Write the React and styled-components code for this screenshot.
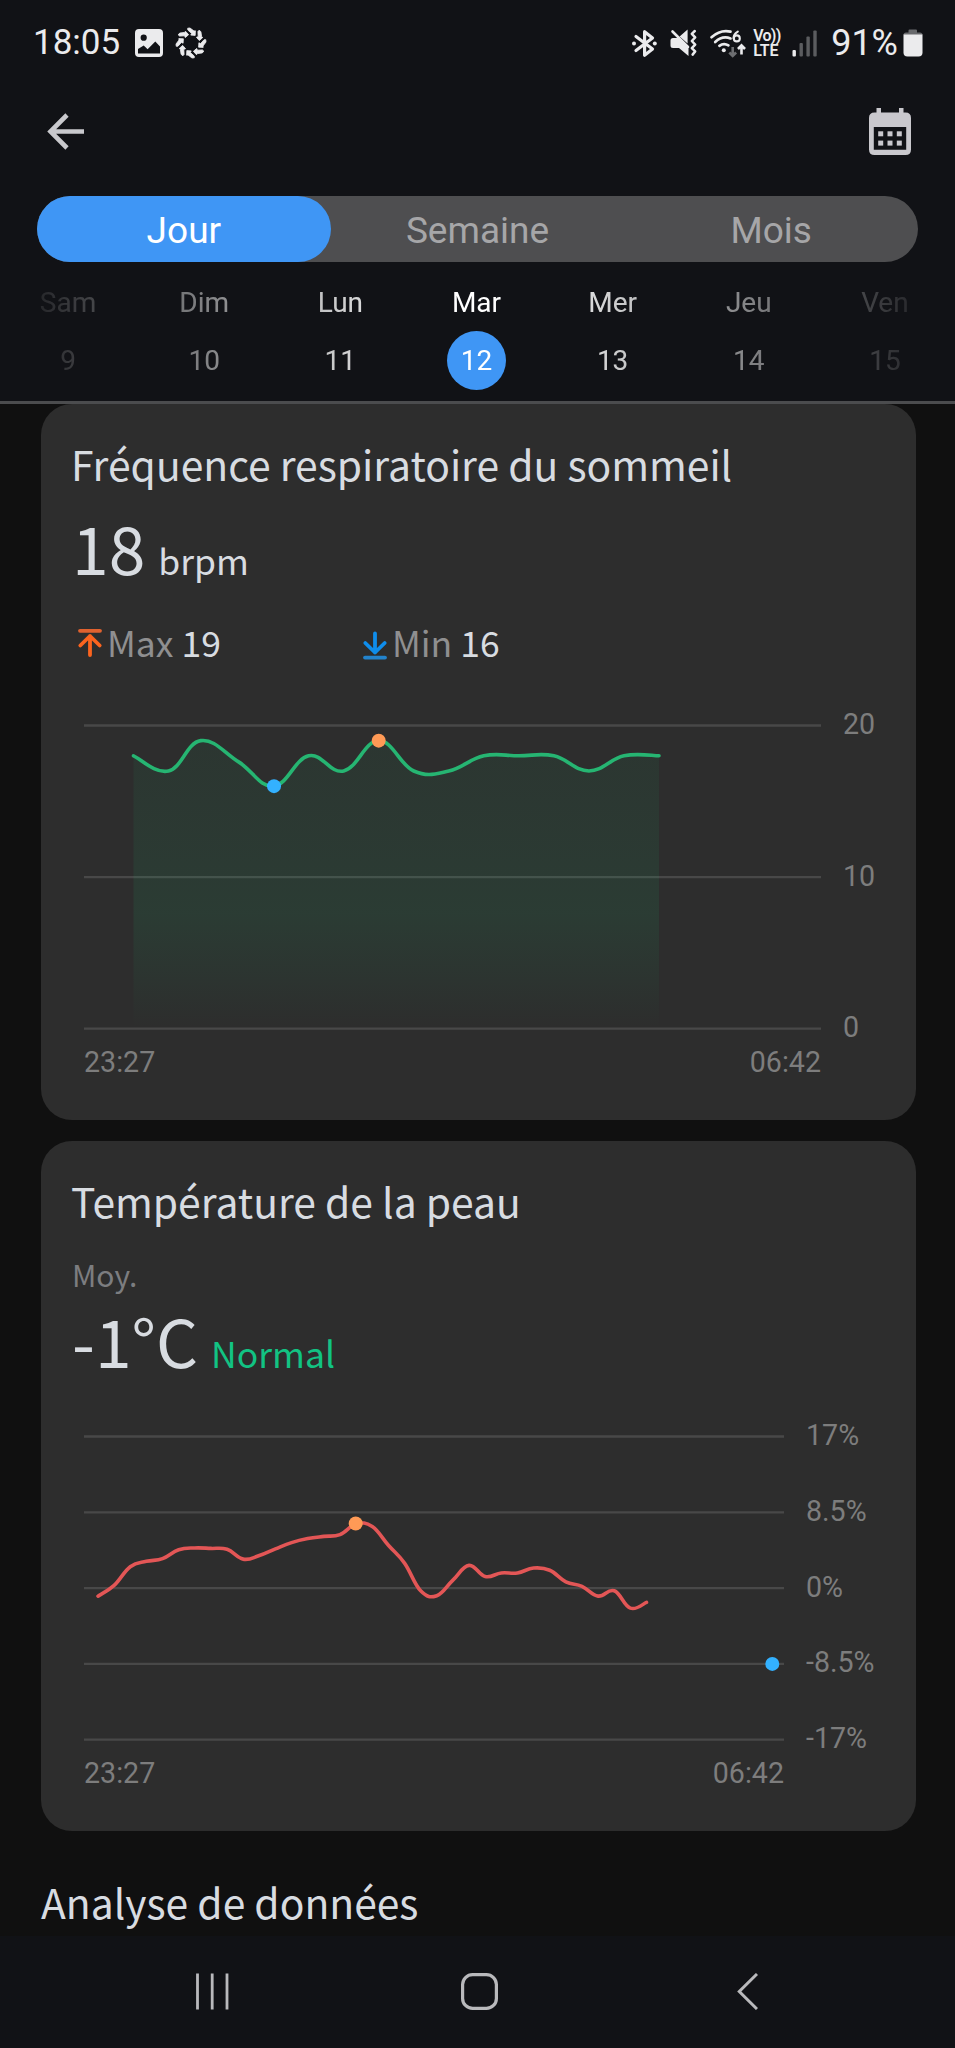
import React, { useState } from 'react';
import styled, { createGlobalStyle } from 'styled-components';

const GlobalStyle = createGlobalStyle`
  * {
    box-sizing: border-box;
  }

  body {
    margin: 0;
    background: #101010;
    font-family: Roboto, sans-serif;
  }

  button {
    border: none;
    background: none;
    padding: 0;
    font-family: inherit;
    cursor: pointer;
  }

  svg {
    display: block;
    flex-shrink: 0;
  }
`;

const Screen = styled.div`
  width: 955px;
  height: 2048px;
  display: flex;
  flex-direction: column;
  overflow: hidden;
  background: #101010;
`;

const Header = styled.header`
  height: 404px;
  flex-shrink: 0;
  background: #111216;
  border-bottom: 3px solid #4b4c4e;
`;

const StatusBar = styled.div`
  height: 86px;
  padding: 0 32px 0 33px;
  display: flex;
  justify-content: space-between;
  align-items: center;
  color: #ebebed;
`;

const StatusGroup = styled.div`
  display: flex;
  align-items: center;
`;

const StatusText = styled.span`
  font-size: ${({ $size }) => $size || 35}px;
  line-height: 40px;
  margin-right: ${({ $gap }) => $gap}px;
`;

const StatusIcon = styled.svg`
  margin-right: ${({ $gap }) => $gap || 0}px;
  overflow: visible;
`;

const VoLte = styled.div`
  width: 29px;
  margin-right: 10px;
  display: flex;
  flex-direction: column;
  font-size: 16px;
  line-height: 15.5px;
  font-weight: 600;
  white-space: nowrap;
`;

const VoLteLine = styled.span`
  letter-spacing: ${({ $tight }) => ($tight ? '-0.7px' : '-0.2px')};
`;

const Toolbar = styled.div`
  height: 91px;
  padding: 0 44px 0 47px;
  display: flex;
  justify-content: space-between;
  align-items: center;
`;

const Tabs = styled.div`
  margin: 19px 37px 0 37px;
  height: 66px;
  display: flex;
  border-radius: 33px;
  background: #4e4e50;
`;

const Tab = styled.button`
  flex: 1;
  padding-top: 3px;
  border-radius: 33px;
  font-size: 37px;
  line-height: 63px;
  color: ${({ $active }) => ($active ? '#fff' : '#a6a6a8')};
  background: ${({ $active }) => ($active ? '#3f96f5' : 'transparent')};
`;

/* The days fade out towards both edges of the strip */
const Week = styled.div`
  display: grid;
  grid-template-columns: repeat(7, 1fr);
  padding: 21px 2px 0 0;
  mask-image: linear-gradient(to right, transparent, #000 430px, #000 525px, transparent);
`;

const Day = styled.button`
  display: flex;
  flex-direction: column;
  align-items: center;
  font-size: 28px;
  color: #fff;
`;

const DayName = styled.span`
  line-height: 40px;
`;

const DayNumber = styled.span`
  width: 59px;
  height: 59px;
  margin-top: 7.5px;
  line-height: 59px;
  border-radius: 50%;
  background: ${({ $active }) => ($active ? '#3f96f5' : 'transparent')};
`;

const Content = styled.main`
  flex: 1;
  min-height: 0;
  padding: 0 39px 0 41px;
  overflow: hidden;
  font-family: 'Noto Sans CJK SC', sans-serif;
  color: #d8dce1;
`;

const Card = styled.section`
  height: ${({ $height }) => $height}px;
  margin-bottom: 21px;
  padding: 30px 30px 0 31px;
  border-radius: 31px;
  background: #2d2d2d;
`;

const Title = styled.h2`
  margin: 0;
  font-size: 40.8px;
  font-weight: 400;
  line-height: 60px;
  white-space: nowrap;
`;

const CardTitle = styled(Title)`
  margin-left: -1px;
`;

const SectionTitle = styled(Title)`
  margin-top: 41px;
`;

const Caption = styled.div`
  margin-top: 23px;
  font-size: 30px;
  line-height: 40px;
  color: #7c7d80;
`;

const Value = styled.div`
  margin-top: ${({ $top }) => $top}px;
  height: 80px;
  display: flex;
  align-items: baseline;
  gap: ${({ $gap }) => $gap}px;
  font-size: 66px;
  line-height: 80px;
`;

const Unit = styled.span`
  font-size: 35.5px;
  line-height: 50px;
  color: ${({ $color }) => $color || 'inherit'};
`;

const Stats = styled.div`
  margin-top: 31px;
  display: flex;
`;

const Stat = styled.div`
  width: 285px;
  display: flex;
  align-items: center;
  font-size: 35.5px;
  line-height: 50px;
  white-space: pre;
`;

const StatLabel = styled.span`
  color: #8f8f90;
`;

const ChartArea = styled.div`
  margin: ${({ $top }) => $top}px 0 0 12px;
  display: flex;
  font-family: Roboto, sans-serif;
  font-size: 28.6px;
  line-height: 30px;
  color: #7d7d7d;
`;

const Plot = styled.div`
  width: ${({ $width }) => $width}px;
`;

const Times = styled.div`
  margin-top: 5px;
  display: flex;
  justify-content: space-between;
`;

const AxisLabels = styled.div`
  height: 333px;
  margin: -1px 0 0 22px;
  display: flex;
  flex-direction: column;
  justify-content: space-between;
`;

const NavBar = styled.nav`
  height: 112px;
  flex-shrink: 0;
  padding: 0 197px 2px 196px;
  display: flex;
  align-items: center;
  background: #111216;
`;

const NavButton = styled.button`
  margin-left: ${({ $left }) => $left || 0}px;
`;

const days = [
  { name: 'Sam', number: 9 },
  { name: 'Dim', number: 10 },
  { name: 'Lun', number: 11 },
  { name: 'Mar', number: 12 },
  { name: 'Mer', number: 13 },
  { name: 'Jeu', number: 14 },
  { name: 'Ven', number: 15 },
];

// [time slot, value]
const breathing = [
  [0, 18], [1, 17], [1.92, 19], [3, 17.6], [4, 16], [5, 18], [6, 17], [7, 19],
  [8, 17], [9, 17], [10, 18], [11, 18], [12, 18], [13, 17], [14, 18], [15, 18],
];

const skin = [
  -0.9, 0.3, 2.4, 3, 3.3, 4.3, 4.5, 4.45, 4.35, 3.25, 3.65, 4.4, 5.1, 5.55, 5.8, 6, 7.2, 6.9,
  4.8, 2.8, -0.3, -0.85, 0.9, 2.55, 1.3, 1.7, 1.7, 2.25, 2, 0.7, 0.2, -0.9, -0.3, -2.25, -1.6,
].map((value, slot) => [slot, value]);

// Cubic curve through all points, tangents taken from the neighbours
const curve = (points) => {
  const k = 0.2;
  const at = (i) => points[Math.max(0, Math.min(points.length - 1, i))];
  let d = `M${at(0).x} ${at(0).y}`;
  for (let i = 1; i < points.length; i++) {
    const prev = at(i - 1);
    const cur = at(i);
    const c1x = prev.x + (cur.x - at(i - 2).x) * k;
    const c1y = prev.y + (cur.y - at(i - 2).y) * k;
    const c2x = cur.x - (at(i + 1).x - prev.x) * k;
    const c2y = cur.y - (at(i + 1).y - prev.y) * k;
    d += ` C${c1x} ${c1y} ${c2x} ${c2y} ${cur.x} ${cur.y}`;
  }
  return d;
};

const LineChart = ({ top, width, min, max, ticks, values, from, to, color, fill, dots }) => {
  const y0 = 15.5;
  const y1 = 318.7;
  const toY = (v) => y1 - ((v - min) / (max - min)) * (y1 - y0);
  const step = (to - from) / (values.length - 1);
  const points = values.map(([slot, v]) => ({ x: from + slot * step, y: toY(v) }));
  const line = curve(points);

  return (
    <ChartArea $top={top}>
      <Plot $width={width}>
        <svg width={width} height="332">
          <defs>
            <linearGradient id="area" gradientUnits="userSpaceOnUse" x1="0" y1="30" x2="0" y2={y1}>
              <stop offset="0" stopColor="#18c070" stopOpacity="0.06" />
              <stop offset="0.6" stopColor="#18c070" stopOpacity="0.1" />
              <stop offset="0.82" stopColor="#18c070" stopOpacity="0.05" />
              <stop offset="1" stopColor="#18c070" stopOpacity="0" />
            </linearGradient>
          </defs>
          {ticks.map((tick, i) => {
            const y = y0 + ((y1 - y0) / (ticks.length - 1)) * i;
            return <line key={tick} x1="0" x2={width} y1={y} y2={y} stroke="#484848" strokeWidth="2.3" />;
          })}
          {fill && <path d={`${line} V${y1} H${from} Z`} fill="url(#area)" />}
          <path d={line} fill="none" stroke={color} strokeWidth="3.6" strokeLinecap="round" />
          {dots.map((dot) => (
            <circle key={dot.color} cx={dot.x} cy={toY(dot.value)} r="7" fill={dot.color} />
          ))}
        </svg>
        <Times>
          <span>23:27</span>
          <span>06:42</span>
        </Times>
      </Plot>
      <AxisLabels>
        {ticks.map((tick) => (
          <span key={tick}>{tick}</span>
        ))}
      </AxisLabels>
    </ChartArea>
  );
};

const GalleryIcon = () => (
  <StatusIcon width="28" height="28" viewBox="0 0 28 28" $gap={12}>
    <path
      fillRule="evenodd"
      fill="currentColor"
      d="M4 0H24A4 4 0 0 1 28 4V24A4 4 0 0 1 24 28H4A4 4 0 0 1 0 24V4A4 4 0 0 1 4 0ZM8.7 5.6A3.1 3.1 0 1 0 8.7 11.8A3.1 3.1 0 1 0 8.7 5.6ZM3 20V24.6H25V17.5L20.3 12.6L12.6 20.3L8.7 16.4Z"
    />
  </StatusIcon>
);

const SwirlIcon = () => (
  <StatusIcon width="32" height="32" viewBox="-16 -16 32 32">
    {[0, 45, 90, 135, 180, 225, 270, 315].map((angle) => (
      <path
        key={angle}
        transform={`rotate(${angle})`}
        fill="currentColor"
        stroke="currentColor"
        strokeWidth="0.8"
        strokeLinejoin="round"
        d="M-3.3 -14.8L-1 -15L3 -12L4.4 -12.2L4.2 -7.6L-0.2 -7.9L0.6 -9.6L-3.2 -13Z"
      />
    ))}
  </StatusIcon>
);

const BluetoothIcon = () => (
  <StatusIcon width="25" height="29" viewBox="0 0 25 29" $gap={13}>
    <path
      d="M4 7.5L20.5 20L12.6 26.3V2.7L20.5 9L4 21.5"
      fill="none"
      stroke="currentColor"
      strokeWidth="3.2"
      strokeLinejoin="round"
      strokeLinecap="round"
    />
    <circle cx="2" cy="14.5" r="2" fill="currentColor" />
    <circle cx="22.8" cy="14.5" r="2" fill="currentColor" />
  </StatusIcon>
);

const MuteIcon = () => (
  <StatusIcon width="27" height="28" viewBox="0 0 27 28" $gap={13}>
    <path d="M9.6 7.5L17.6 0.5V14.5ZM0.5 11.5Q0.5 9 3 9H8L18.5 19.5V27L9 19H3Q0.5 19 0.5 16.5Z" fill="currentColor" />
    <path d="M2.5 2.5L18 18" stroke="currentColor" strokeWidth="2.6" strokeLinecap="round" />
    <path
      d="M24.8 2L21.8 4.8L25.2 8.4L21.8 12L25.2 15.6L21.8 19.2L25.2 22.4L22.6 25.6"
      fill="none"
      stroke="currentColor"
      strokeWidth="2.5"
      strokeLinejoin="round"
      strokeLinecap="round"
    />
  </StatusIcon>
);

const WifiIcon = () => (
  <StatusIcon width="36" height="28" viewBox="0 0 36 28" $gap={7}>
    <g fill="none" stroke="currentColor" strokeWidth="2.7" strokeLinecap="round">
      <path d="M1.5 8.2Q10.5 0.2 20.5 2.6" />
      <path d="M5.2 13Q12.3 6.3 20.5 9.4" />
      <path d="M9.4 16.8Q13.8 13.6 18.4 16.4" />
    </g>
    <circle cx="13.8" cy="21.3" r="2" fill="currentColor" />
    <path d="M27.8 2.6Q23.5 5 23.6 9.2" fill="none" stroke="currentColor" strokeWidth="2.1" strokeLinecap="round" />
    <circle cx="26.8" cy="9.4" r="3" fill="none" stroke="currentColor" strokeWidth="2.1" />
    <path d="M22.7 18V27M19.3 23.5L22.7 27L26.1 23.5" fill="none" stroke="#6d6e71" strokeWidth="2.6" />
    <path d="M31.5 25.5V16.5M28 20L31.5 16.3L35 20" fill="none" stroke="currentColor" strokeWidth="2.6" />
  </StatusIcon>
);

const SignalIcon = () => (
  <StatusIcon width="25" height="27" viewBox="0 0 25 27" $gap={14}>
    <rect x="0.5" y="20" width="3.4" height="6.5" rx="1" fill="currentColor" />
    <g fill="#5b5c5f">
      <rect x="7.5" y="13" width="3.4" height="13.5" rx="1" />
      <rect x="14.4" y="6.5" width="3.4" height="20" rx="1" />
      <rect x="21.3" y="0.5" width="3.4" height="26" rx="1" />
    </g>
  </StatusIcon>
);

const BatteryIcon = () => (
  <StatusIcon width="20" height="28" viewBox="0 0 20 28">
    <path d="M5.5 1.5Q5.5 0.5 6.5 0.5H13Q14 0.5 14 1.5V3.5H17Q19.5 3.5 19.5 6H0.5Q0.5 3.5 3 3.5H5.5Z" fill="#68696c" />
    <path d="M0.5 5.5H19.5V23.5Q19.5 27.5 15.5 27.5H4.5Q0.5 27.5 0.5 23.5Z" fill="currentColor" />
  </StatusIcon>
);

const BackArrow = () => (
  <svg width="37" height="37" viewBox="0 0 37 37">
    <path d="M20 2L3.5 18.5L20 35M3.5 18.5H37" fill="none" stroke="#c9c9cd" strokeWidth="4.6" />
  </svg>
);

const CalendarIcon = () => (
  <svg width="42" height="47" viewBox="0 0 42 47" fill="#c9c8cd">
    <path
      fillRule="evenodd"
      d="M7.5 0H12V4.5H30V0H34.5V4.5H36.5Q42 4.5 42 10V41.5Q42 47 36.5 47H5.5Q0 47 0 41.5V10Q0 4.5 5.5 4.5H7.5ZM4.8 19V41.8H37.2V19Z"
    />
    {[9.2, 18.5, 27.8].map((x) => (
      <g key={x}>
        <rect x={x} y="23.3" width="5" height="5" />
        <rect x={x} y="32.6" width="5" height="5" />
      </g>
    ))}
  </svg>
);

const MaxIcon = () => (
  <svg width="35" height="40" viewBox="1 0 35 40">
    <g fill="none" strokeWidth="3.8" strokeLinecap="round" strokeLinejoin="round">
      <path d="M9 8.8H29" stroke="#e0622f" />
      <path d="M19 33V14M9.3 23.5L19 14L28.7 23.5" stroke="#fb641f" />
    </g>
  </svg>
);

const MinIcon = () => (
  <svg width="35" height="40" viewBox="1 0 35 40">
    <g fill="none" strokeWidth="3.8" strokeLinecap="round" strokeLinejoin="round">
      <path d="M9 35.6H29" stroke="#2383cc" />
      <path d="M19 11.5V30.5M9.3 21L19 30.5L28.7 21" stroke="#0f8deb" />
    </g>
  </svg>
);

const App = () => {
  const [tab, setTab] = useState('Jour');
  const [day, setDay] = useState(12);

  return (
    <>
      <GlobalStyle />
      <Screen>
        <Header>
          <StatusBar>
            <StatusGroup>
              <StatusText $gap={15}>18:05</StatusText>
              <GalleryIcon />
              <SwirlIcon />
            </StatusGroup>
            <StatusGroup>
              <BluetoothIcon />
              <MuteIcon />
              <WifiIcon />
              <VoLte>
                <VoLteLine $tight>Vo))</VoLteLine>
                <VoLteLine>LTE</VoLteLine>
              </VoLte>
              <SignalIcon />
              <StatusText $size={36} $gap={5}>91%</StatusText>
              <BatteryIcon />
            </StatusGroup>
          </StatusBar>

          <Toolbar>
            <button aria-label="Retour">
              <BackArrow />
            </button>
            <button aria-label="Calendrier">
              <CalendarIcon />
            </button>
          </Toolbar>

          <Tabs>
            {['Jour', 'Semaine', 'Mois'].map((name) => (
              <Tab key={name} $active={tab === name} onClick={() => setTab(name)}>
                {name}
              </Tab>
            ))}
          </Tabs>

          <Week>
            {days.map((item) => (
              <Day key={item.number} onClick={() => setDay(item.number)}>
                <DayName>{item.name}</DayName>
                <DayNumber $active={day === item.number}>{item.number}</DayNumber>
              </Day>
            ))}
          </Week>
        </Header>

        <Content>
          <Card $height={716}>
            <CardTitle>Fréquence respiratoire du sommeil</CardTitle>
            <Value $top={12} $gap={13}>
              18
              <Unit>brpm</Unit>
            </Value>
            <Stats>
              <Stat>
                <MaxIcon />
                <StatLabel>Max </StatLabel>19
              </Stat>
              <Stat>
                <MinIcon />
                <StatLabel>Min </StatLabel>16
              </Stat>
            </Stats>
            <LineChart
              top={43}
              width={737}
              min={0}
              max={20}
              ticks={['20', '10', '0']}
              values={breathing}
              from={49.5}
              to={575}
              color="#26b572"
              fill
              dots={[
                { x: 190, value: 16, color: '#33b1ff' },
                { x: 294.7, value: 19, color: '#ff9a56' },
              ]}
            />
          </Card>

          <Card $height={690}>
            <CardTitle>Température de la peau</CardTitle>
            <Caption>Moy.</Caption>
            <Value $top={5} $gap={13}>
              -1°C
              <Unit $color="#12c383">Normal</Unit>
            </Value>
            <LineChart
              top={42}
              width={700}
              min={-17}
              max={17}
              ticks={['17%', '8.5%', '0%', '-8.5%', '-17%']}
              values={skin}
              from={14}
              to={562.5}
              color="#e35656"
              dots={[
                { x: 271.7, value: 7.25, color: '#ff9a56' },
                { x: 688.3, value: -8.5, color: '#33b1ff' },
              ]}
            />
          </Card>

          <SectionTitle>Analyse de données</SectionTitle>
        </Content>

        <NavBar>
          <NavButton aria-label="Applications récentes">
            <svg width="33" height="37" viewBox="0 0 33 37">
              <path d="M1.5 0.5V36.5M16.2 0.5V36.5M31 0.5V36.5" stroke="#b9b9bc" strokeWidth="2.8" />
            </svg>
          </NavButton>
          <NavButton $left={232} aria-label="Accueil">
            <svg width="37" height="37" viewBox="0 0 37 37">
              <rect x="1.6" y="1.6" width="33.8" height="33.8" rx="10" fill="none" stroke="#b9b9bc" strokeWidth="3.2" />
            </svg>
          </NavButton>
          <NavButton $left={239} aria-label="Retour">
            <svg width="21" height="37" viewBox="0 0 21 37">
              <path d="M20 1L2.3 18.5L20 36" fill="none" stroke="#b9b9bc" strokeWidth="3" />
            </svg>
          </NavButton>
        </NavBar>
      </Screen>
    </>
  );
};

export default App;
